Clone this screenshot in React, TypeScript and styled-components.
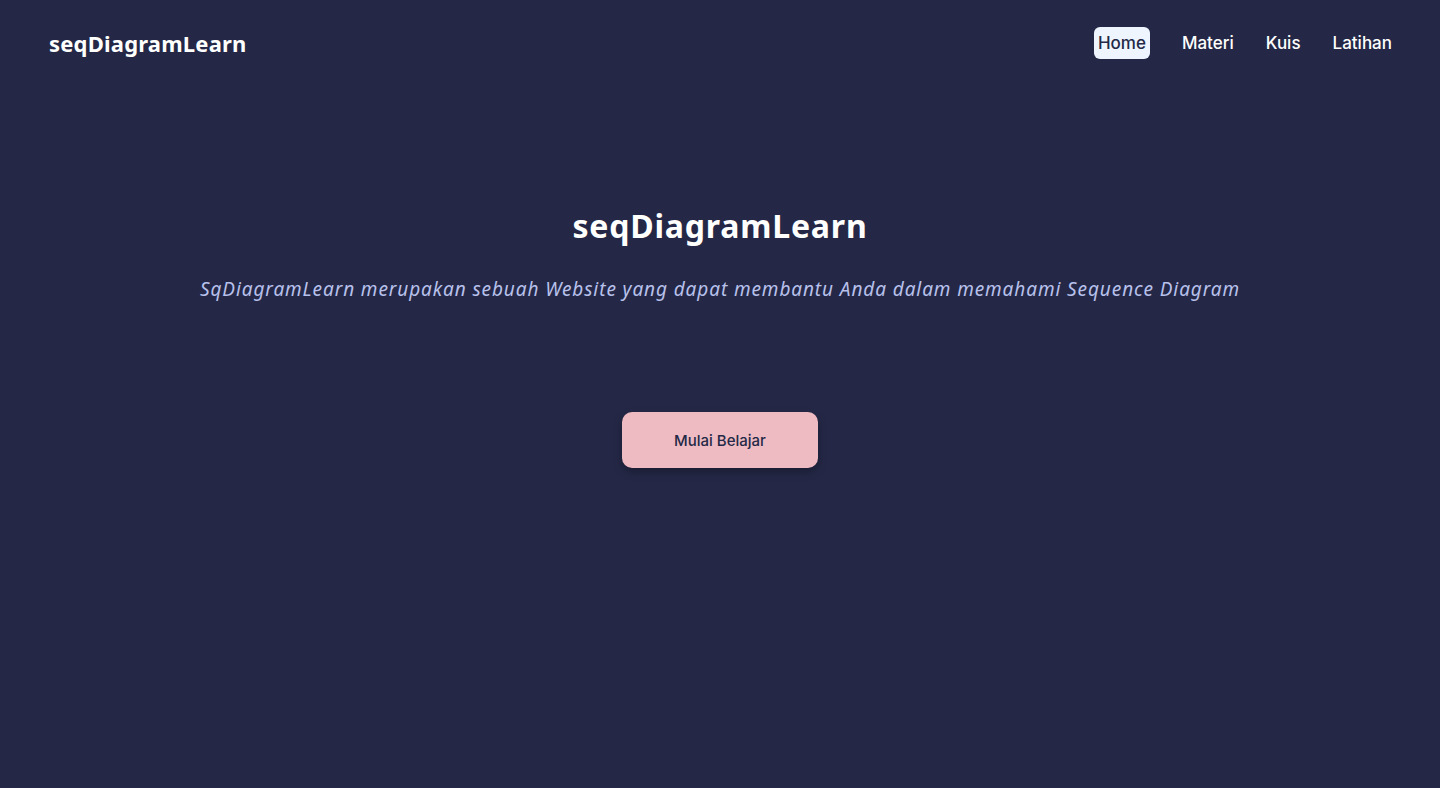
import React from 'react';
import styled, { createGlobalStyle } from 'styled-components';

const GlobalStyle = createGlobalStyle`
  html, body {
    margin: 0;
    padding: 0;
    background: #242846;
  }
  body {
    font-family: Inter, "Noto Sans", sans-serif;
  }
`

const Page = styled.div`
  min-height: 788px;
  background: #242846;
  display: flex;
  flex-direction: column;
`

const Header = styled.header`
  height: 86px;
  padding: 0 44px 0 49px;
  display: flex;
  align-items: center;
  justify-content: space-between;
`

const Brand = styled.div`
  font-family: "Noto Sans", sans-serif;
  font-weight: 700;
  font-size: 22px;
  letter-spacing: 0.2px;
  color: #fffffe;
`

const Nav = styled.nav`
  display: flex;
  align-items: center;
  gap: 24px;
`

const NavItem = styled.a<{ $active?: boolean }>`
  font-family: Inter, sans-serif;
  font-weight: 500;
  font-size: 17px;
  line-height: 32px;
  padding: 0 4px;
  border-radius: 6px;
  cursor: pointer;
  color: ${p => (p.$active ? '#232946' : '#fffffe')};
  background: ${p => (p.$active ? '#eef5ff' : 'transparent')};
  &:first-child {
    margin-right: 4px;
  }
`

const Hero = styled.main`
  display: flex;
  flex-direction: column;
  align-items: center;
  padding-top: 118px;
`

const Title = styled.h1`
  margin: 0;
  font-family: "Noto Sans", sans-serif;
  font-weight: 700;
  font-size: 32px;
  letter-spacing: 0.8px;
  line-height: 44px;
  color: #fffffe;
`

const Subtitle = styled.p`
  margin: 28px 0 0;
  font-family: "Noto Sans", sans-serif;
  font-style: italic;
  font-size: 19px;
  letter-spacing: 0.9px;
  line-height: 26px;
  color: #b8c1ec;
`

const StartButton = styled.button`
  margin-top: 110px;
  width: 196px;
  height: 56px;
  border: none;
  border-radius: 10px;
  background: #eebbc3;
  color: #232946;
  font-family: Inter, sans-serif;
  font-weight: 500;
  font-size: 15px;
  box-shadow: 0 4px 8px rgba(0, 0, 0, 0.3);
  cursor: pointer;
`

const links = ['Home', 'Materi', 'Kuis', 'Latihan'];

const App: React.FC = () => {
    return (
        <Page>
            <GlobalStyle />
            <Header>
                <Brand>seqDiagramLearn</Brand>
                <Nav>
                    {links.map(l => (
                        <NavItem key={l} $active={l === 'Home'}>{l}</NavItem>
                    ))}
                </Nav>
            </Header>
            <Hero>
                <Title>seqDiagramLearn</Title>
                <Subtitle>SqDiagramLearn merupakan sebuah Website yang dapat membantu Anda dalam memahami Sequence Diagram</Subtitle>
                <StartButton>Mulai Belajar</StartButton>
            </Hero>
        </Page>
    )
}

export default App;
